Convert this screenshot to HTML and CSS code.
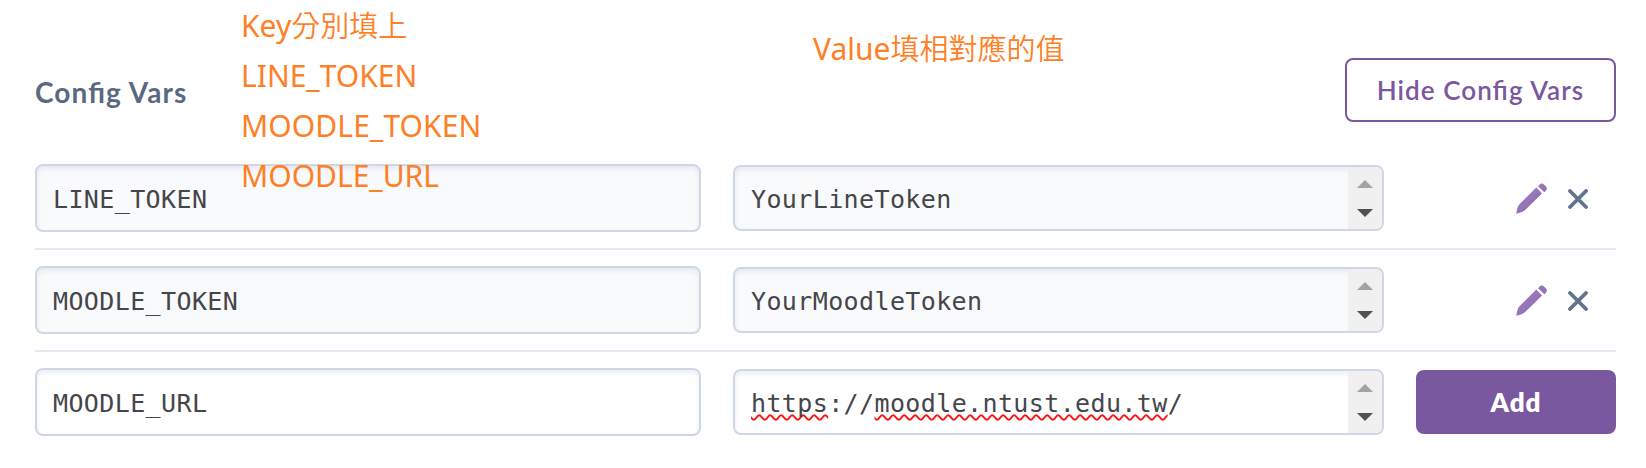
FILE: index.html
```html
<!DOCTYPE html>
<html lang="zh-Hant">
<head>
<meta charset="utf-8">
<title>Config Vars</title>
<link rel="stylesheet" href="styles.css">
</head>
<body>
<svg width="0" height="0" class="defs">
  <defs>
    <linearGradient id="purple" x1="0" y1="0" x2="1" y2="1"><stop offset="0" stop-color="#a587c5"/><stop offset="1" stop-color="#8560a9"/></linearGradient>
    <symbol id="pencil" viewBox="0 0 32 32"><path fill="url(#purple)" d="M.2 30.8 1.3 25.4Q1.8 23 3.7 21L20.3 4.6 26 10.4 9.4 26.7Q7.4 28.5 5.4 29.2ZM22 3.2 23.2 2Q25.6-.6 28.2 1.7L29.8 3.3Q32 5.7 29.8 7.7L28.4 9.3Z"/></symbol>
    <symbol id="cross" viewBox="0 0 20 20"><path d="M2 2 18 18M18 2 2 18" fill="none" stroke="#62738e" stroke-width="3.8" stroke-linecap="round"/></symbol>
    <symbol id="arrows" viewBox="0 0 16 38"><path fill="#a3a3a3" d="M0 8 8 0 16 8Z"/><path fill="#505050" d="M0 29H16L8 37Z"/></symbol>
  </defs>
</svg>
<main class="panel">
  <header class="head">
    <h2 class="title">Config Vars</h2>
    <button class="btn outline">Hide Config Vars</button>
  </header>
  <section class="row">
    <div class="field key locked">LINE_TOKEN</div>
    <div class="field value locked"><span class="text">YourLineToken</span><span class="scroll"><svg width="16" height="38"><use href="#arrows"/></svg></span></div>
    <div class="actions"><svg class="pencil"><use href="#pencil"/></svg><svg class="cross"><use href="#cross"/></svg></div>
  </section>
  <section class="row">
    <div class="field key locked">MOODLE_TOKEN</div>
    <div class="field value locked"><span class="text">YourMoodleToken</span><span class="scroll"><svg width="16" height="38"><use href="#arrows"/></svg></span></div>
    <div class="actions"><svg class="pencil"><use href="#pencil"/></svg><svg class="cross"><use href="#cross"/></svg></div>
  </section>
  <section class="row">
    <div class="field key">MOODLE_URL</div>
    <div class="field value"><span class="text"><span class="typo">https</span>://<span class="typo">moodle.ntust.edu.tw</span>/</span><span class="scroll"><svg width="16" height="38"><use href="#arrows"/></svg></span></div>
    <button class="btn solid">Add</button>
  </section>
</main>
<div class="note keys"><div>Key<span class="cjk">分別填上</span></div><div>LINE_TOKEN</div><div class="long">MOODLE_TOKEN</div><div>MOODLE_URL</div></div>
<div class="note values"><span>Value</span><span class="cjk">填相對應的值</span></div>
</body>
</html>
```
FILE: styles.css
```css
* { box-sizing: border-box; }
body { margin: 0; background: #fff; font-family: Lato, sans-serif; }
.defs { display: block; }
.panel { width: 1581px; margin-left: 35px; }
.head { display: flex; justify-content: space-between; align-items: flex-start; height: 148px; padding-top: 58px; }
.title { margin: 17px 0 0; font-size: 28px; line-height: 34px; font-weight: 700; letter-spacing: 1.1px; font-feature-settings: "liga" 1; color: #596981; }
.btn { display: block; height: 64px; padding: 0; border-radius: 8px; font-family: Lato, sans-serif; font-size: 26px; line-height: 60px; }
.outline { width: 271px; border: 2px solid #79589f; background: #fff; color: #79589f; font-weight: 600; letter-spacing: 1.05px; font-feature-settings: "liga" 1; }
.solid { width: 200px; margin: 2px 0 0; border: 0; background: #79589f; color: #fff; font-weight: 800; letter-spacing: .9px; }
.row { display: grid; grid-template-columns: 666px 651px 200px; column-gap: 32px; height: 102px; padding-top: 16px; }
.row + .row { border-top: 2px solid #e5e9f4; height: 102px; }
.row:nth-of-type(1) { height: 100px; }
.field { display: flex; border: 2px solid #cfd7e6; border-radius: 8px; background: #fff; box-shadow: inset 0 3px 5px rgba(90, 115, 160, .12); font: 25px/68px "DejaVu Sans Mono", monospace; letter-spacing: .38px; color: #45454a; overflow: hidden; white-space: pre; }
.key { height: 68px; padding-left: 16px; }
.value { height: 66px; margin-top: 1px; padding-left: 16px; line-height: 66px; }
.locked { background: #f9fafc; }
.text { flex: 1; }
.scroll { width: 34px; padding: 13px 0 0 9px; background: #f0f0f0; line-height: 0; }
.typo { text-decoration: underline wavy #ff1010 1.6px; text-decoration-skip-ink: none; text-underline-offset: 1.5px; }
.actions { display: flex; padding: 19px 0 0 100px; gap: 20px; }
.pencil { width: 32px; height: 32px; }
.cross { width: 20px; height: 20px; margin-top: 6px; }
.note { position: absolute; color: #ff7f27; font: 400 30px/50px "Noto Sans", "Open Sans", sans-serif; white-space: nowrap; }
.keys { left: 241px; top: 1px; }
.long { letter-spacing: .1px; }
.values { left: 813px; top: 24px; }
.cjk { font-family: "Noto Sans CJK TC", sans-serif; font-size: 29px; font-weight: 350; line-height: 1; }
```
